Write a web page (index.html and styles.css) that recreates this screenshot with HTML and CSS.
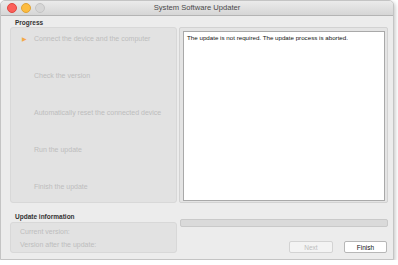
FILE: index.html
```html
<!DOCTYPE html>
<html lang="en">
<head>
<meta charset="UTF-8">
<title>System Software Updater</title>
<link rel="stylesheet" href="styles.css">
</head>
<body>
<div class="window">
  <div class="titlebar">
    <div class="lights">
      <span class="light red"></span>
      <span class="light yellow"></span>
      <span class="light off"></span>
    </div>
    <div class="title">System Software Updater</div>
  </div>

  <div class="content">
    <div class="top">
      <div class="left">
        <div class="group-label">Progress</div>
        <div class="steps">
          <div class="step current"><span class="arrow">&#9654;</span>Connect the device and the computer</div>
          <div class="step">Check the version</div>
          <div class="step">Automatically reset the connected device</div>
          <div class="step">Run the update</div>
          <div class="step">Finish the update</div>
        </div>
      </div>
      <div class="log-frame">
        <div class="log">The update is not required. The update process is aborted.</div>
      </div>
    </div>

    <div class="bottom">
      <div class="left">
        <div class="group-label">Update information</div>
        <div class="info">
          <div>Current version:</div>
          <div>Version after the update:</div>
        </div>
      </div>
      <div class="right">
        <div class="progress"></div>
        <div class="buttons">
          <button class="btn" disabled>Next</button>
          <button class="btn primary">Finish</button>
        </div>
      </div>
    </div>
  </div>
</div>
</body>
</html>
```

FILE: styles.css
```css
* { box-sizing: border-box; }
body { margin: 0; background: #fff; font-family: "Liberation Sans", Arial, sans-serif; }

.window { width: 394px; height: 260px; background: #ececec; border: 1px solid #c4c4c4; border-radius: 5px 5px 0 0; box-shadow: 1px 2px 4px rgba(0,0,0,0.25); overflow: hidden; }

.titlebar { height: 15px; position: relative; background: linear-gradient(#ebebeb, #d6d6d6); border-bottom: 1px solid #b4b4b4; }
.lights { position: absolute; left: 6px; top: 2px; display: flex; gap: 4px; }
.light { width: 10px; height: 10px; border-radius: 50%; }
.red { background: #fc605b; border: 1px solid #de4840; }
.yellow { background: #fdbc40; border: 1px solid #dea236; }
.off { background: #d6d6d6; border: 1px solid #c4c4c4; }
.title { text-align: center; font-size: 7.6px; line-height: 14px; color: #4a4a4a; }

.content { padding: 0 5px 0 9px; }
.top { display: flex; gap: 2px; }
.left { width: 168px; }
.group-label { font-size: 6.5px; font-weight: bold; color: #333; padding: 3px 0 0 5px; height: 11px; }

.steps { height: 176px; background: #e2e2e2; border: 1px solid #d8d8d8; border-radius: 3px; padding: 6px 0 0 23px; }
.step { position: relative; font-size: 7px; color: #bdbdbd; height: 37px; line-height: 10px; }
.arrow { position: absolute; left: -12px; top: 0; color: #f3a94a; font-size: 6px; }

.log-frame { margin-top: 11px; width: 210px; height: 176px; background: #e4e4e4; border: 1px solid #d2d2d2; border-radius: 2px; padding: 3px 2px 1px 3px; }
.log { height: 100%; background: #fff; border: 1px solid #a9a9a9; font-size: 6.2px; color: #111; padding: 2px 3px; }

.bottom { display: flex; gap: 3px; }
.bottom .left .group-label { padding-top: 10px; height: 19px; }
.info { height: 31px; background: #e2e2e2; border: 1px solid #d8d8d8; border-radius: 3px; padding: 2px 0 0 9px; font-size: 7px; color: #bdbdbd; line-height: 13px; }
.right { width: 210px; padding-top: 16px; }
.progress { height: 8px; background: #dadada; border: 1px solid #c9c9c9; border-radius: 2px; }
.buttons { display: flex; justify-content: flex-end; gap: 11px; margin-top: 14px; padding-right: 1px; }
.btn { font-family: "Liberation Sans", Arial, sans-serif; font-size: 6.5px; height: 12px; padding: 0; width: 44px; border-radius: 2px; background: #fff; border: 1px solid #b7b7b7; color: #111; }
.btn:disabled { background: #f3f3f3; border-color: #d3d3d3; color: #bdbdbd; }
.btn.primary { width: 43px; }
```
